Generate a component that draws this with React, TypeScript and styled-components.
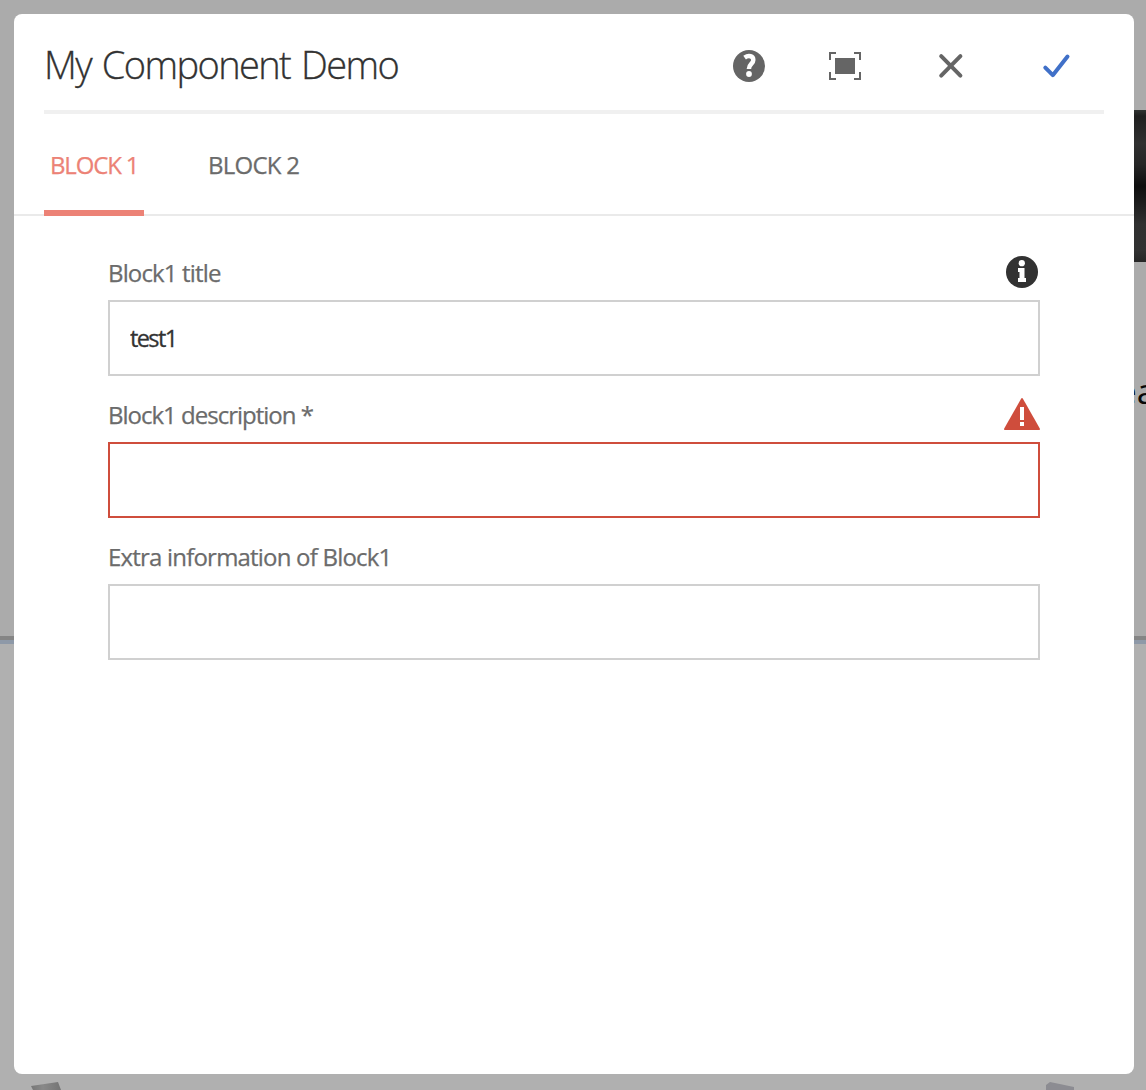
import React from "react";
import styled, { createGlobalStyle } from "styled-components";

const GlobalStyle = createGlobalStyle`
  * { box-sizing: border-box; }
  body { margin: 0; overflow: hidden; font-family: "Open Sans", "Noto Sans", sans-serif; }
`;

const Screen = styled.main`
  position: relative;
  width: 1146px;
  height: 1090px;
  padding: 14px 12px 16px 14px;
  overflow: hidden;
  background: #acacac;
`;

const Page = styled.div`
  position: absolute;
  inset: 0;
  background: linear-gradient(#ababab 0 636px, #858585 636px 640px, #8e99a8 640px 644px, #b0b0b0 644px);
`;

const Banner = styled.div`
  position: absolute;
  top: 110px;
  right: 0;
  width: 40px;
  height: 152px;
  background: linear-gradient(#303331, #1f1f1f 4%, #303030 22%, #262626 36%, #0e0e0e 50%, #181818 58%, #303030 75%, #323232 92%, #262626);
`;

const PageText = styled.span`
  position: absolute;
  top: 367px;
  left: 1117px;
  color: #080808;
  font-size: 35px;
  line-height: 48px;
`;

const Fragments = styled.svg`
  position: absolute;
  left: 0;
  bottom: 0;
`;

const Dialog = styled.section`
  position: relative;
  display: flex;
  flex-direction: column;
  height: 1060px;
  border-radius: 8px;
  background: #fff;
`;

const Header = styled.header`
  display: flex;
  align-items: center;
  justify-content: space-between;
  height: 100px;
  margin: 0 30px;
  border-bottom: 4px solid #f0f0f0;
`;

const Title = styled.h1`
  margin: 0;
  padding-top: 3px;
  color: #323232;
  font-size: 38px;
  font-weight: 300;
  line-height: 52px;
  letter-spacing: -1.6px;
  word-spacing: 2.5px;
  -webkit-text-stroke: 0.3px #323232;
  white-space: nowrap;
`;

const Actions = styled.div`
  display: flex;
  align-items: center;
  gap: 62px;
  padding: 8px 30px 0 0;
`;

const IconButton = styled.button<{ $width: number }>`
  display: flex;
  justify-content: center;
  width: ${(p) => p.$width}px;
  height: 36px;
  padding: 0;
  border: 0;
  background: none;
`;

const Tabs = styled.nav`
  display: flex;
  height: 102px;
  padding: 0 30px;
  gap: 58px;
  border-bottom: 2px solid #eaeaea;
`;

const Tab = styled.button<{ $active?: boolean }>`
  width: 100px;
  height: 102px;
  padding: 6px 0 0 6px;
  border: 0;
  border-bottom: 6px solid ${(p) => (p.$active ? "#ec8276" : "transparent")};
  background: none;
  color: ${(p) => (p.$active ? "#ec8276" : "#6b6b6b")};
  font: 400 24px/32px "Open Sans", sans-serif;
  letter-spacing: ${(p) => (p.$active ? -1.15 : -0.75)}px;
  -webkit-text-stroke: 0.25px currentColor;
  text-align: left;
  white-space: nowrap;
`;

const Form = styled.form`
  display: flex;
  flex-direction: column;
  padding: 32px 94px;
`;

const Field = styled.div`
  height: 142px;
`;

const LabelRow = styled.div`
  display: flex;
  align-items: center;
  justify-content: space-between;
  height: 52px;
`;

const Label = styled.label<{ $tracking: number }>`
  padding-bottom: 2px;
  color: #6b6b6b;
  font-size: 24px;
  line-height: 32px;
  letter-spacing: ${(p) => p.$tracking}px;
  -webkit-text-stroke: 0.25px currentColor;
`;

const Input = styled.input<{ $invalid?: boolean }>`
  display: block;
  width: 932px;
  height: 76px;
  padding: 0 20px;
  border: 2px solid ${(p) => (p.$invalid ? "#cf4d3c" : "#d0d0d0")};
  border-radius: 0;
  outline: 0;
  background: #fff;
  color: #323232;
  font: 400 23.5px/32px "Open Sans", sans-serif;
  letter-spacing: -1.6px;
  -webkit-text-stroke: 0.3px currentColor;
`;

const HelpIcon = () => (
  <svg width="34" height="36" viewBox="0 0 34 36">
    <circle cx="17" cy="18" r="16" fill="#656565" />
    <path d="M12.6 9.6C16.8 6.6 21.3 8.2 21.3 11.9C21.3 16 16.9 15.9 16.9 21" fill="none" stroke="#fff" strokeWidth="4.5" />
    <circle cx="17" cy="26" r="2.9" fill="#fff" />
  </svg>
);

const FullscreenIcon = () => (
  <svg width="34" height="36" viewBox="0 0 34 36" fill="none" stroke="#656565" strokeWidth="2">
    <path d="M2 12V5H8M26 5H32V12M32 24V31H26M8 31H2V24" />
    <rect x="7" y="10" width="20" height="16" fill="#656565" stroke="none" />
  </svg>
);

const CloseIcon = () => (
  <svg width="34" height="36" viewBox="0 0 34 36" fill="none" stroke="#656565" strokeWidth="4" strokeLinecap="round">
    <path d="M7.2 8.2L26.4 27.6M26.4 8.2L7.2 27.6" />
  </svg>
);

const CheckIcon = () => (
  <svg width="34" height="36" viewBox="0 0 34 36" fill="none" stroke="#4070c8" strokeWidth="4" strokeLinecap="round" strokeLinejoin="round">
    <path d="M5.3 19.6L12.8 27.2L27.5 8.5" />
  </svg>
);

const InfoMark = styled.svg`
  margin: 0 2px 4px 0;
`;

const AlertMark = styled.svg`
  margin-bottom: 4px;
`;

const InfoIcon = () => (
  <InfoMark width="32" height="32" viewBox="0 0 32 32">
    <circle cx="16" cy="16" r="16" fill="#323232" />
    <circle cx="15.8" cy="7.2" r="3.1" fill="#fff" />
    <path d="M12 12H18.5V22H20V26H12V22H13.5V16H12Z" fill="#fff" />
  </InfoMark>
);

const AlertIcon = () => (
  <AlertMark width="36" height="32" viewBox="0 0 36 32">
    <path d="M17.2 .5Q18 -.5 18.8 .5L35.8 30.5Q36.3 32 34.7 32H1.3Q-.3 32 .2 30.5Z" fill="#cf4d3c" />
    <path d="M16 9H20V22H16ZM16 24H20V28H16Z" fill="#fff" />
  </AlertMark>
);

export default function App() {
  return (
    <>
      <GlobalStyle />
      <Screen>
        <Page>
          <Banner />
          <PageText>ea</PageText>
          <Fragments width="1146" height="12" viewBox="0 0 1146 12">
            <defs>
              <linearGradient id="metal">
                <stop stopColor="#777" />
                <stop offset=".4" stopColor="#898989" />
                <stop offset="1" stopColor="#747474" />
              </linearGradient>
            </defs>
            <path d="M31 8L58 4L61 12H33Z" fill="url(#metal)" />
            <path d="M1046 12V7L1050 4L1074 9V12Z" fill="#8c8c92" />
          </Fragments>
        </Page>
        <Dialog>
          <Header>
            <Title>My Component Demo</Title>
            <Actions>
              <IconButton $width={34} aria-label="Help"><HelpIcon /></IconButton>
              <IconButton $width={34} aria-label="Fullscreen"><FullscreenIcon /></IconButton>
              <IconButton $width={54} aria-label="Close"><CloseIcon /></IconButton>
              <IconButton $width={34} aria-label="Done"><CheckIcon /></IconButton>
            </Actions>
          </Header>
          <Tabs>
            <Tab $active>BLOCK 1</Tab>
            <Tab>BLOCK 2</Tab>
          </Tabs>
          <Form>
            <Field>
              <LabelRow><Label htmlFor="title" $tracking={-0.85}>Block1 title</Label><InfoIcon /></LabelRow>
              <Input id="title" defaultValue="test1" />
            </Field>
            <Field>
              <LabelRow><Label htmlFor="description" $tracking={-1}>Block1 description *</Label><AlertIcon /></LabelRow>
              <Input id="description" $invalid />
            </Field>
            <Field>
              <LabelRow><Label htmlFor="extra" $tracking={-0.8}>Extra information of Block1</Label></LabelRow>
              <Input id="extra" />
            </Field>
          </Form>
        </Dialog>
      </Screen>
    </>
  );
}
